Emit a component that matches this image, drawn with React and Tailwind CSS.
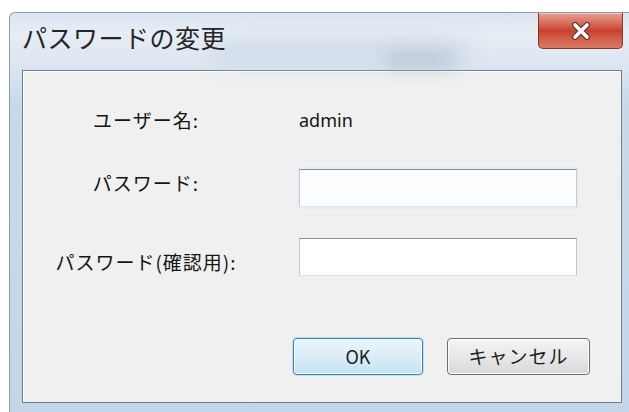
import React from 'react'

const jp = { fontFamily: '"Noto Sans CJK JP", "Noto Sans", sans-serif' }

function CloseGlyph() {
  return (
    <svg width="22" height="18" viewBox="0 0 22 18">
      <path d="M5 3 L17 15 M17 3 L5 15" stroke="#5a3a36" strokeWidth="6" strokeLinecap="round" />
      <path d="M5 3 L17 15 M17 3 L5 15" stroke="#ffffff" strokeWidth="3.6" strokeLinecap="round" />
    </svg>
  )
}

function Field({ focused }) {
  return (
    <div
      className={`ml-[37px] w-[278px] h-[38px] border border-t-[#8a8e93] border-x-[#c3c9cf] border-b-[#dfe3e8] ${
        focused ? 'bg-[#fbfdff] shadow-[0_0_0_2px_#e4eef8]' : 'bg-white'
      }`}
    />
  )
}

export default function App() {
  return (
    <div className="w-[629px] h-[412px] overflow-hidden bg-white" style={jp}>
      <div className="ml-[9px] mt-[12px] w-[626px] h-[400px] flex flex-col rounded-tl-[6px] border-l border-t border-[#8d9bab] bg-[linear-gradient(180deg,#dbe5f0_0px,#e6edf5_20px,#dde7f2_50px,#c8d9eb_90px,#c3d5e9_100%)]">
        {/* title bar */}
        <div className="h-[57px] flex items-start relative">
          <div className="absolute left-[200px] top-[30px] w-[260px] h-[18px] rounded-full bg-[#bccbdb] blur-[12px] opacity-60" />
          <div className="absolute left-[375px] top-[40px] w-[70px] h-[14px] rounded-full bg-[#9aa7b5] blur-[9px] opacity-50" />
          <span className="relative pl-[12px] pt-[8px] text-[25px] leading-[32px] text-[#262626] tracking-[0.5px]">
            パスワードの変更
          </span>
          <button className="relative ml-auto mr-[12px] w-[85px] h-[36px] flex items-center justify-center rounded-b-[5px] border border-t-0 border-[#8a3328] bg-gradient-to-b from-[#e8a195] via-[#c9412c] to-[#d97b66] shadow-[inset_0_1px_0_#f2c3ba]">
            <CloseGlyph />
          </button>
        </div>

        {/* client area */}
        <div className="flex-1 ml-[12px] mr-[13px] mb-[9px] border border-[#6f7c89] bg-[#f0f0f0] shadow-[inset_1px_1px_0_#ffffff] text-[#151515]">
          <div className="mt-[35px] h-[28px] flex items-center">
            <span className="ml-[7px] w-[232px] text-center text-[19px] tracking-[1px]">ユーザー名:</span>
            <span className="ml-[37px] text-[18px]" style={{ fontFamily: '"Noto Sans", sans-serif' }}>admin</span>
          </div>
          <div className="mt-[35px] flex items-center">
            <span className="ml-[7px] w-[232px] text-center text-[19px] tracking-[1px] -mt-[10px]">パスワード:</span>
            <Field focused />
          </div>
          <div className="mt-[31px] flex items-center">
            <span className="ml-[7px] w-[232px] text-center text-[19px] tracking-[1px] mt-[10px]">パスワード(確認用):</span>
            <Field />
          </div>
          <div className="mt-[61px] flex">
            <button className="ml-[270px] w-[130px] h-[37px] rounded-[4px] border border-[#3c7fb1] bg-gradient-to-b from-[#e8f6fd] via-[#dcecf7] to-[#c4e3f3] shadow-[0_0_0_1px_#b7e2f7,inset_0_0_0_1px_#ffffff] text-[18px] text-[#1e1e1e]">
              OK
            </button>
            <button className="ml-[24px] w-[143px] h-[37px] rounded-[4px] border border-[#707070] bg-gradient-to-b from-[#f4f4f4] via-[#e8e8e8] to-[#d8d8d8] shadow-[inset_0_0_0_1px_#fcfcfc] text-[19px] tracking-[1px] text-[#1e1e1e]">
              キャンセル
            </button>
          </div>
        </div>
      </div>
    </div>
  )
}
